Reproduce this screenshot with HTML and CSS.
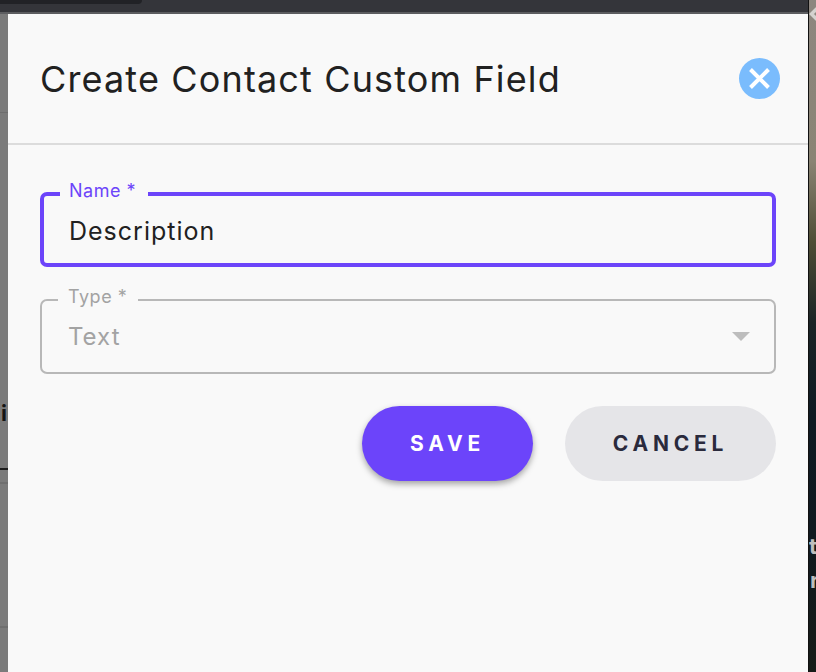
FILE: index.html
```html
<!DOCTYPE html>
<html lang="en">
<head>
<meta charset="utf-8">
<title>Create Contact Custom Field</title>
<link rel="stylesheet" href="styles.css">
</head>
<body>
<div class="main-col">
  <div class="topbar"><div class="topbar-pill"></div></div>
  <div class="stage">
    <div class="side-left">
      <span class="stray stray-left">i</span>
      <div class="rule rule-a"></div>
      <div class="rule rule-b"></div>
      <div class="rule rule-c"></div>
      <div class="rule rule-d"></div>
    </div>
    <main class="modal">
      <header class="modal-head">
        <h1 class="modal-title">Create Contact Custom Field</h1>
        <button class="close" aria-label="Close">
          <svg viewBox="0 0 41 41" width="41" height="41"><circle cx="20.5" cy="20.5" r="20.5" fill="#7abcfd"/><path d="M11.5 11.5 L29.5 29.5 M29.5 11.5 L11.5 29.5" stroke="#fff" stroke-width="4" fill="none"/></svg>
        </button>
      </header>
      <form class="modal-body">
        <fieldset class="field field-focus">
          <legend class="legend">Name *</legend>
          <div class="value">Description</div>
        </fieldset>
        <fieldset class="field field-disabled">
          <legend class="legend">Type *</legend>
          <div class="value">Text</div>
          <span class="caret"></span>
        </fieldset>
        <div class="actions">
          <button type="button" class="btn btn-save">SAVE</button>
          <button type="button" class="btn btn-cancel">CANCEL</button>
        </div>
      </form>
    </main>
  </div>
</div>
<div class="side-right">
  <svg class="chevron" viewBox="0 0 8 14" width="8" height="14"><path d="M8 1.5 L2.5 7 L8 12.5" stroke="#d4d2cf" stroke-width="3.5" fill="none"/></svg>
  <span class="stray stray-r1">t</span>
  <span class="stray stray-r2">r</span>
</div>
</body>
</html>
```
FILE: styles.css
```css
* { box-sizing: border-box; }
html, body { margin: 0; height: 100%; overflow: hidden; }
body { display: flex; background: #7b7b7b; font-family: "Inter", "Liberation Sans", sans-serif; }

.main-col { width: 808px; flex: none; display: flex; flex-direction: column; }
.topbar { height: 14px; flex: none; background: #34353a; border-bottom: 2px solid #5c5d60; }
.topbar-pill { width: 142px; height: 4px; background: #212226; border-radius: 0 0 12px 0; }

.stage { flex: 1; display: flex; min-height: 0; }

.side-left { width: 8px; flex: none; background: #7b7b7b; position: relative; overflow: hidden; }
.rule { position: absolute; left: 0; width: 8px; height: 1px; background: #6e6e6e; }
.rule-a { top: 98px; }
.rule-b { top: 454px; height: 2px; background: #1e1e1e; }
.rule-c { top: 468px; height: 2px; background: #6f6f6f; }
.rule-d { top: 612px; height: 2px; background: #6f6f6f; }
.stray { position: absolute; font-weight: 700; font-size: 22px; line-height: 24px; }
.stray-left { top: 387px; left: 1px; color: #151515; }

.modal { width: 800px; flex: none; background: #f9f9f9; }
.modal-head { height: 131px; padding: 0 28px 0 32px; display: flex; align-items: center; justify-content: space-between; border-bottom: 2px solid #dcdcdc; }
.modal-title { margin: 0; font-size: 36px; font-weight: 400; letter-spacing: 1.14px; color: #212121; }
.close { width: 41px; height: 41px; padding: 0; border: 0; background: none; display: block; }
.close svg { display: block; }

.modal-body { padding: 36px 32px 0; display: flex; flex-direction: column; }
.field { position: relative; margin: 0; border-style: solid; border-radius: 7px; }
.legend { font-size: 18px; line-height: 20px; padding-bottom: 6px; letter-spacing: 0.5px; }
.value { letter-spacing: 1px; line-height: 30px; }

.field-focus { border: 4px solid #6c44fa; height: 86px; padding: 0 25px; }
.field-focus .legend { color: #6c44fa; margin-left: -9px; padding-left: 9px; padding-right: 12px; }
.field-focus .value { color: #212121; font-size: 25px; margin-top: 9px; }

.field-disabled { border: 2px solid #b8b8b8; margin-top: 20px; height: 87px; padding: 0 26px; }
.field-disabled .legend { color: #a3a3a3; margin-left: -10px; padding-left: 10px; padding-right: 11px; }
.field-disabled .value { color: #a3a3a3; font-size: 24px; margin-top: 9px; }
.caret { position: absolute; right: 24px; top: 19px; width: 0; height: 0; border-left: 9px solid transparent; border-right: 9px solid transparent; border-top: 9px solid #bdbdbd; }

.actions { margin-top: 32px; display: flex; justify-content: flex-end; gap: 32px; }
.btn { height: 75px; border: 0; border-radius: 38px; font-family: "Inter", "Liberation Sans", sans-serif; font-size: 21px; font-weight: 700; letter-spacing: 4.8px; padding: 0; }
.btn-save { width: 171px; background: #6c44fa; color: #fff; box-shadow: 0 3px 6px rgba(0,0,0,0.35); }
.btn-cancel { width: 211px; background: #e5e5e8; color: #2a2a3c; }

.side-right { flex: 1; position: relative; overflow: hidden; border-left: 1px solid #111; background: linear-gradient(180deg, #8d8780 0%, #8a8474 24%, #4f4d35 36%, #1b2426 48%, #0f1a22 62%, #10191f 80%, #171c18 100%); }
.chevron { position: absolute; top: 7px; left: 0; display: block; }
.stray-r1 { top: 534px; left: 0; color: #bdbdbd; }
.stray-r2 { top: 568px; left: 1px; color: #bdbdbd; }
```
